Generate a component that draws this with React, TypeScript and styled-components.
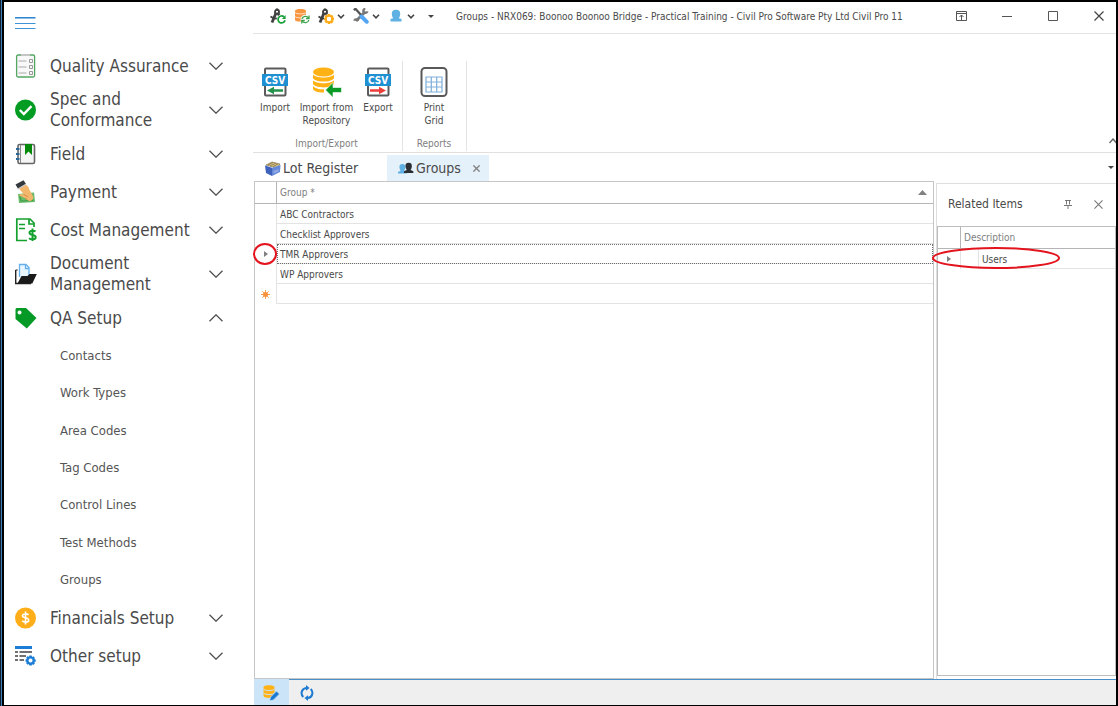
import React, { useState } from "react";
import styled, { createGlobalStyle } from "styled-components";

const Global = createGlobalStyle`
  *, *::before, *::after { box-sizing: border-box; }
  body { margin: 0; background: #fff; }
  body, button, table, input {
    font-family: "DejaVu Sans Condensed", "Noto Sans", sans-serif;
    color: #4a4a4a;
  }
  button { border: 0; padding: 0; background: none; cursor: pointer; }
  svg { display: block; flex: none; }
`;

/* ---------- frame ---------- */

const Desktop = styled.div`
  min-height: 100vh;
  display: flex;
  background: #3f7fb8;
  border-left: 1px solid #10202f;
  padding-left: 1px;
`;

const Window = styled.div`
  flex: 1;
  min-width: 0;
  display: flex;
  background: #fff;
  border: solid #000;
  border-width: 2px 2px 1px 2px;
`;

const Sidebar = styled.nav`
  width: 249px;
  flex: none;
  padding: 11px 30px 20px 11px;
`;

const Main = styled.main`
  flex: 1;
  min-width: 0;
  display: flex;
  flex-direction: column;
`;

/* ---------- sidebar ---------- */

const MenuToggle = styled.button`
  display: block;
  height: 34px;
  padding-bottom: 14px;
`;

const NavSection = styled.button<{ $tall?: boolean }>`
  width: 100%;
  height: ${(p) => (p.$tall ? 50 : 38)}px;
  display: grid;
  grid-template-columns: 22px 1fr 14px;
  column-gap: 13px;
  align-items: center;
  text-align: left;
  font-size: 17px;
  line-height: 21px;
`;

const SubList = styled.ul`
  list-style: none;
  margin: 0;
  padding: 0 0 0 45px;
  height: 262px;
  display: grid;
  grid-template-rows: repeat(7, 1fr);
  align-items: center;
`;

const SubLink = styled.a`
  display: block;
  font-size: 13px;
  line-height: 18px;
  color: #555;
  text-decoration: none;
`;

/* ---------- title bar ---------- */

const TitleBar = styled.header`
  height: 32px;
  display: flex;
  align-items: center;
  padding-left: 17px;
  padding-bottom: 3px;
  border-bottom: 1px solid #e3e3e3;
`;

const QuickTools = styled.div`
  display: flex;
  align-items: center;
  gap: 8px;
`;

const QuickTool = styled.button`
  display: flex;
  align-items: center;
  justify-content: center;
  gap: 3px;
  min-width: 16px;
`;

const DropTool = styled(QuickTool)`
  width: 27px;
`;

const Title = styled.h1`
  flex: 1;
  margin: 0 0 0 17px;
  font-size: 10px;
  font-weight: 400;
  white-space: nowrap;
`;

const WindowControls = styled.div`
  display: flex;
  gap: 12px;
`;

const WindowButton = styled.button`
  width: 34px;
  height: 24px;
  display: grid;
  place-items: center;
`;

/* ---------- ribbon ---------- */

const Ribbon = styled.section`
  height: 119px;
  display: flex;
  align-items: stretch;
  padding: 27px 0 0 2px;
  border-bottom: 1px solid #e0e0e0;
  position: relative;
`;

const RibbonGroup = styled.div`
  display: flex;
  flex-direction: column;
  justify-content: space-between;
  padding: 6px 4px 1px 0;
  border-right: 1px solid #e3e3e3;
  margin-bottom: 1px;
`;

const RibbonTools = styled.div`
  display: flex;
  align-items: flex-start;
`;

const RibbonTool = styled.button<{ $wide?: boolean }>`
  width: ${(p) => (p.$wide ? 63 : 40)}px;
  display: flex;
  flex-direction: column;
  align-items: center;
  gap: 4px;
  font-size: 10px;
  line-height: 13px;
`;

const GroupCaption = styled.div`
  font-size: 10px;
  line-height: 12px;
  text-align: center;
  color: #808080;
`;

const ReportsGroup = styled(RibbonGroup)`
  padding: 6px 12px 1px 11px;
`;

const CollapseButton = styled.button`
  position: absolute;
  right: 0;
  bottom: 8px;
`;

/* ---------- tabs ---------- */

const TabBar = styled.div`
  height: 28px;
  display: flex;
  align-items: flex-end;
  padding-left: 2px;
`;

const Tab = styled.div<{ $active?: boolean }>`
  height: 26px;
  display: flex;
  align-items: center;
  width: ${(p) => (p.$active ? 102 : 132)}px;
  padding-left: ${(p) => (p.$active ? 11 : 10)}px;
  background: ${(p) => (p.$active ? "#e5f1fa" : "transparent")};
`;

const TabLabel = styled.button`
  display: flex;
  align-items: center;
  gap: 2px;
  font-size: 14px;
  line-height: 18px;
`;

const TabClose = styled.button`
  margin-left: auto;
  padding-right: 9px;
`;

const TabMenu = styled.button`
  margin: 0 2px 12px auto;
`;

/* ---------- content ---------- */

const Workspace = styled.div`
  flex: 1;
  display: flex;
  gap: 2px;
  padding-left: 1px;
`;

const GridPane = styled.section`
  flex: 1;
  min-width: 0;
  border: 1px solid #c6c6c6;
`;

const DataGrid = styled.table`
  width: 100%;
  table-layout: fixed;
  border-collapse: separate;
  border-spacing: 0;
  font-size: 10px;
  line-height: 12px;
`;

const HeadCell = styled.th`
  height: 22px;
  padding: 0 6px 0 3px;
  border-bottom: 1px solid #b5b5b5;
  text-align: left;
  font-weight: 400;
  color: #808080;
`;

const MarkerHead = styled(HeadCell)<{ $width?: number }>`
  width: ${(p) => p.$width ?? 22}px;
  border-right: 1px solid #b5b5b5;
`;

const HeadContent = styled.div`
  display: flex;
  align-items: center;
  justify-content: space-between;
`;

const MarkerCell = styled.td`
  position: relative;
  padding: 0;
  border-right: 1px solid #e3e3e3;
`;

const Marker = styled.div`
  display: grid;
  place-items: center;
`;

const Cell = styled.td<{ $focused?: boolean }>`
  height: 20px;
  padding: 2px 3px 0;
  border-bottom: 1px solid #e3e3e3;
  outline: ${(p) => (p.$focused ? "1px dotted #707070" : "none")};
  outline-offset: ${(p) => (p.$focused ? "-1px" : "0")};
`;

const Ring = styled.svg<{ $left: number; $top: number }>`
  position: absolute;
  left: ${(p) => p.$left}px;
  top: ${(p) => p.$top}px;
  z-index: 2;
  pointer-events: none;
`;

const RelatedPane = styled.aside`
  width: 180px;
  flex: none;
  display: flex;
  flex-direction: column;
  margin-top: 2px;
  padding-bottom: 3px;
  border: solid #dedede;
  border-width: 1px 0 0 1px;
`;

const RelatedHeader = styled.div`
  height: 42px;
  display: flex;
  align-items: center;
  padding: 0 13px 2px 11px;
`;

const RelatedTitle = styled.h2`
  flex: 1;
  margin: 0;
  font-size: 12px;
  font-weight: 400;
`;

const RelatedTools = styled.div`
  display: flex;
  align-items: center;
  gap: 22px;
`;

const RelatedBody = styled.div`
  flex: 1;
  border: 1px solid #bdbdbd;
`;

/* ---------- status bar ---------- */

const StatusBar = styled.footer`
  height: 26px;
  display: flex;
  padding-left: 1px;
  background: linear-gradient(to right, #fff 1px, #efefef 1px);
`;

const StatusTools = styled.div`
  flex: 1;
  display: flex;
  border-top: 1px solid #4a90c8;
`;

const StatusButton = styled.button<{ $active?: boolean }>`
  width: 35px;
  display: grid;
  place-items: center;
  background: ${(p) => (p.$active ? "#cce4f7" : "transparent")};
`;

/* ---------- icons ---------- */

const Chevron = ({ up = false }: { up?: boolean }) => (
  <svg width="14" height="8" viewBox="0 0 14 8" fill="none" stroke="#505050" strokeWidth="1.3">
    <path d={up ? "M.5 7.2 7 .8l6.5 6.4" : "M.5.8 7 7.2 13.5.8"} />
  </svg>
);

const SmallChevron = () => (
  <svg width="8" height="5" viewBox="0 0 8 5" fill="none" stroke="#444" strokeWidth="1.6">
    <path d="M1 .8 4 3.8 7 .8" />
  </svg>
);

const Caret = () => (
  <svg width="6" height="3" viewBox="0 0 6 3" fill="#444">
    <path d="M0 0h6L3 3z" />
  </svg>
);

const Hamburger = () => (
  <svg width="21" height="12" viewBox="0 0 21 12">
    <path d="M0 .8h20.500" stroke="#1979ca" strokeWidth="1.4" />
    <path d="M0 6.500h20.500M0 11.500h20.500" stroke="#3f92d6" />
  </svg>
);

const ChecklistIcon = () => (
  <svg width="22" height="24" viewBox="0 0 22 24" fill="none">
    <rect x="1.600" y="1" width="18" height="22" rx="1.500" fill="#f8f8f8" stroke="#53a562" strokeWidth="1.300" />
    <path d="M6 1h9" stroke="#c5c5c5" strokeWidth="2" />
    <path d="M3.500 7h8M3.500 13h8M3.500 19h8" stroke="#aaa" strokeWidth="1.200" />
    <path d="M14.500 5.500h3v3h-3zM14.500 11.500h3v3h-3zM14.500 17.500h3v3h-3z" stroke="#999" />
  </svg>
);

const CheckIcon = () => (
  <svg width="22" height="22" viewBox="0 0 22 22">
    <circle cx="10.500" cy="11" r="10.500" fill="#039c23" />
    <path d="m4.800 11 4 4L16.500 7.200" fill="none" stroke="#fff" strokeWidth="2.400" />
  </svg>
);

const NotebookIcon = () => (
  <svg width="22" height="22" viewBox="0 0 22 22">
    <rect x="3" y="1.500" width="16.500" height="19" rx="1.500" fill="#f5f5f5" stroke="#666" strokeWidth="1.600" />
    <path d="M5.500 2v18" stroke="#888" />
    <path d="M10 1h7v11l-3.500-3.500L10 12z" fill="#078a0b" />
    <path d="M1 6h3.500M1 11h3.500M1 16h3.500" stroke="#28699b" strokeWidth="2" />
  </svg>
);

const PaymentIcon = () => (
  <svg width="22" height="24" viewBox="0 0 22 24">
    <path d="m3 14 16-1.500 1 9.500L4 23z" fill="#68bc68" />
    <path d="m5 16 12-1 .8 5.500L6 21z" fill="none" stroke="#3f9849" />
    <path d="M3 7.500 10 4c3 2 4 3.500 4.500 6l3.500 6c1 3-1 5-4 5l-4-3-5-2c-1-1 0-2 1-2l3 .5z" fill="#f2b66c" />
    <path d="M9 14.500 13 17M10 18l2 1.500" stroke="#d88e48" />
    <path d="M.5 4.500 8.500.2 11 4 3 8.800z" fill="#33383d" />
    <path d="m2.500 9.200 8.500-5" stroke="#c9ccd0" strokeWidth="1.200" />
  </svg>
);

const CostIcon = () => (
  <svg width="22" height="24" viewBox="0 0 22 24" fill="none" stroke="#14a02e">
    <path d="M19 9V5l-4-4H1.800v21.500H12" strokeWidth="1.700" />
    <path d="M14 1v5h5" strokeWidth="1.700" />
    <path d="M4 6.500h6M4 10.500h6" strokeWidth="1.500" />
    <path d="M20.500 13.500c-1-1-6-1.500-6 1.300 0 3 6.200 1.400 6.200 4.400 0 2.800-5 2.600-6.700 1M17.500 10.500v12.500" strokeWidth="2" />
  </svg>
);

const FoldersIcon = () => (
  <svg width="22" height="22" viewBox="0 0 22 22">
    <path d="M4.500 14V1.500H11l3 3V13" fill="#e9f5ff" stroke="#66b0ee" strokeWidth="1.300" />
    <path d="M10.500 1.500v4H14" fill="none" stroke="#66b0ee" strokeWidth="1.300" />
    <path d="M.7 7v13.500H16" fill="none" stroke="#222" strokeWidth="1.400" />
    <path d="M.7 7h2" stroke="#222" />
    <path d="M2.500 20.500 6.500 13h6l2-2h7.300l-4.500 9.500z" fill="#1a1a1a" />
  </svg>
);

const TagIcon = () => (
  <svg width="22" height="22" viewBox="0 0 22 22">
    <path fillRule="evenodd" d="M1.500 1H11l10.500 10-9.700 10.500L.5 12V2zM4.500 3.400a2 2 0 1 0 .1 0z" fill="#049a25" />
  </svg>
);

const CoinIcon = () => (
  <svg width="22" height="22" viewBox="0 0 22 22">
    <circle cx="10.500" cy="11" r="10.500" fill="#ffae1a" />
    <path d="M13.500 8c-1-1.500-6-1.600-6 .8 0 2.600 6.200 1.400 6.200 4.400 0 2.500-5 2.500-6.500.6M10.500 4.500v13" fill="none" stroke="#fff" strokeWidth="1.600" />
  </svg>
);

const GEAR =
  "M-1.200-5h2.400l.4 1.500 1.200-.8 1.700 1.700-.8 1.200 1.500.3v2.400l-1.500.3.8 1.200-1.700 1.700-1.200-.8L1.200 5h-2.400l-.4-1.500-1.200.8-1.700-1.700.8-1.200L-5 1.100v-2.200l1.400-.4-.8-1.200 1.700-1.700 1.200.8zM0-2a2 2 0 1 0 .1 0z";

const SetupIcon = () => (
  <svg width="22" height="22" viewBox="0 0 22 22">
    <path d="M0 2.500h17" stroke="#1b7dd6" strokeWidth="3" />
    <path d="M0 7h3M4.500 7H17M0 11h3M4.500 11H11M0 15h3M4.500 15H9" stroke="#707070" strokeWidth="2" />
    <path fillRule="evenodd" transform="translate(15.500 15.500)" d={GEAR} fill="#1b7dd6" />
  </svg>
);

const Compass = ({ children }: { children: React.ReactNode }) => (
  <svg width="16" height="16" viewBox="0 0 16 16" fill="none" stroke="#404040">
    <path d="M7 .5v2" strokeWidth="2.200" />
    <circle cx="7" cy="3.800" r="2" strokeWidth="1.900" />
    <path d="M6 5 2 14.500M8 5l4.500 9.500" strokeWidth="2.800" />
    <path d="M.5 8.500C4 11 8 11 11 9" strokeWidth="1.800" />
    {children}
  </svg>
);

const CompassRefresh = () => (
  <Compass>
    <circle cx="11.500" cy="11.300" r="4.700" fill="#fff" stroke="none" />
    <path d="M14 8.900A3.500 3.500 0 1 0 15 12.300" stroke="#17a038" strokeWidth="1.700" />
    <path d="M15.600 7v4H12z" fill="#17a038" stroke="none" />
  </Compass>
);

const CompassGear = () => (
  <Compass>
    <circle cx="11" cy="11" r="5" fill="#fff" stroke="none" />
    <path d={GEAR} transform="translate(11 11)" fill="#ffab17" stroke="none" fillRule="evenodd" />
    <circle cx="11" cy="11" r="2.200" fill="#fff" stroke="none" />
  </Compass>
);

const DatabaseRefresh = () => (
  <svg width="16" height="16" viewBox="0 0 16 16">
    <path d="M1 2.500C1 .4 12 .4 12 2.500V12c0 2-11 2-11 0z" fill="#f8953f" />
    <path d="M1 4.500c1 1.800 10 1.800 11 0M1 8.500c1 1.800 10 1.800 11 0" fill="none" stroke="#fff" strokeWidth=".7" />
    <circle cx="11.300" cy="11.500" r="4.700" fill="#fff" />
    <g fill="none" stroke="#3ba24b" strokeWidth="1.300">
      <path d="M8 11c.5-3 5-3.500 6.500-1M14.800 12c-.5 3-5 3.500-6.500 1" />
      <path d="M15 7.500v3h-3M7.800 15.500v-3h3" />
    </g>
  </svg>
);

const ToolsIcon = () => (
  <svg width="16" height="16" viewBox="0 0 16 16" fill="none">
    <path d="M12.500 3.500 3 13" stroke="#777" strokeWidth="2.800" />
    <path d="M14.600 3.300c-.8 2-3.200 2.200-4 .8S10.500.9 12.300 1M1.200 12.800c.6-2 3.400-1.800 3.800.2" stroke="#777" strokeWidth="2.200" />
    <path d="M.8 2.200 2.500.8 8 7" stroke="#555" strokeWidth="2.300" />
    <path d="m8.500 8.500 5.300 5.300" stroke="#53a6f5" strokeWidth="3.900" strokeLinecap="round" />
  </svg>
);

const PERSON = "M5.500 0C8.600 0 9.500 2 9.200 4.500 9 6.500 8 7.500 7.800 8.500L11 10v2H0v-2l3.200-1.500C3 7.500 2 6.500 1.800 4.500 1.500 2 2.400 0 5.500 0z";

const UserIcon = () => (
  <svg width="16" height="16" viewBox="0 0 16 16">
    <path d="M8 1.800c3.200 0 4.400 1.800 4.200 4.400-.2 2-.8 3.200-1.400 4L13.500 11v2.500h-11V11l2.700-.8c-.6-.8-1.200-2-1.400-4C3.600 3.600 4.800 1.800 8 1.800z" fill="#5eb1e2" />
  </svg>
);

const UsersIcon = () => (
  <svg width="16" height="12" viewBox="0 0 16 12">
    <path d={PERSON} transform="translate(0 2) scale(.8)" fill="#5eb1e2" />
    <path d={PERSON} transform="translate(6 .8) scale(.85)" fill="#2b2f33" />
  </svg>
);

const DisplayOptions = () => (
  <svg width="11" height="10" viewBox="0 0 11 10" fill="none" stroke="#555">
    <path d="M.5.500h10v9H.5zM.5 2.500h10M5.500 9V4M3.500 6l2-2 2 2" />
  </svg>
);

const Cross = ({ size, color }: { size: number; color: string }) => (
  <svg width={size} height={size} viewBox="0 0 10 10" stroke={color} strokeWidth={size > 8 ? 1.2 : 2}>
    <path d="m.5.500 9 9M9.500.500l-9 9" />
  </svg>
);

const CsvIcon = ({ out = false }: { out?: boolean }) => (
  <svg width="26" height="30" viewBox="0 0 26 30">
    <rect x="3" y="1.500" width="20.500" height="27" rx="1" fill="#fff" stroke="#5b5b5b" strokeWidth="2" />
    <rect y="7" width="26" height="12" fill="#1f90d2" />
    <text x="13" y="16.500" textAnchor="middle" fontFamily="DejaVu Sans Condensed, sans-serif" fontWeight="700" fontSize="10" fill="#fff">
      CSV
    </text>
    {out ? (
      <path d="M5 22.300h9V19.800l7 3.700-7 3.700v-2.500H5z" fill="#ee3e3a" />
    ) : (
      <path d="M21 22.300h-9V19.800l-7 3.700 7 3.700v-2.500h9z" fill="#23924a" />
    )}
  </svg>
);

const RepositoryIcon = () => (
  <svg width="30" height="30" viewBox="0 0 30 30">
    <g fill="#ffb216">
      <ellipse cx="11.500" cy="5" rx="10.500" ry="4.500" />
      <path d="M1 7.500c3 4 18 4 21 0v3.700c-3 4.500-18 4.500-21 0z" />
      <path d="M1 13.200c3 4 18 4 21 0V17c-3 4.500-18 4.500-21 0z" />
      <path d="M1 19c2 2.700 7 3.500 11 3.300v3.200C6 25.700 1.500 24 1 22z" />
    </g>
    <path d="M13.500 23 21 15.500V20.500h8.500v5H21v5z" fill="#0b9a25" stroke="#fff" strokeWidth=".6" />
  </svg>
);

const PrintGridIcon = () => (
  <svg width="28" height="30" viewBox="0 0 28 30" fill="none">
    <rect x="1.500" y="1" width="25" height="28" rx="3.500" stroke="#595959" strokeWidth="2" />
    <path d="M6 10h16v15H6zM6 15h16M6 20h16M11.300 10v15M16.700 10v15" stroke="#7eafd9" strokeWidth="1.200" />
  </svg>
);

const LotIcon = () => (
  <svg width="16" height="15" viewBox="0 0 16 15">
    <path d="m1 4 6-3 8 2-3 4z" fill="#dac88d" stroke="#75663b" strokeWidth=".6" />
    <path d="m3 4 5-2.500M5 5l6-3M8 5.500 13 3" stroke="#7d6b3b" strokeWidth=".8" />
    <path d="m0 4.500 7 2.200V15l-6-3z" fill="#3f62bd" />
    <path d="M7 6.700 15.500 4 15 11l-8 4z" fill="#6688d8" />
    <path d="M8.500 10 13.500 8v2.500l-5 2z" fill="#91a9e5" />
  </svg>
);

const Pin = () => (
  <svg width="8" height="9" viewBox="0 0 8 9" fill="none" stroke="#777">
    <path d="M1 .5h6M2.500.5v4M5.500.5v4M0 5.500h8M4 5.500V9" />
  </svg>
);

const RowArrow = () => (
  <svg width="4" height="6" viewBox="0 0 4 6" fill="#808080">
    <path d="m0 0 4 3-4 3z" />
  </svg>
);

const SortArrow = () => (
  <svg width="9" height="5" viewBox="0 0 9 5" fill="#808080">
    <path d="M0 5 4.500 0 9 5z" />
  </svg>
);

const NewRow = () => (
  <svg width="9" height="9" viewBox="0 0 9 9">
    <path d="M4.500 0v9M0 4.500h9M1.300 1.300l6.400 6.400M7.700 1.300 1.300 7.700" stroke="#f6a154" />
    <circle cx="4.500" cy="4.500" r="2.500" fill="#f7913a" />
  </svg>
);

const EditDataIcon = () => (
  <svg width="17" height="17" viewBox="0 0 17 17">
    <path d="M.5 3C.5.5 11.500.5 11.500 3v9c0 2.500-11 2.500-11 0z" fill="#ffb216" />
    <path d="M.5 5c1 2 10 2 11 0M.5 9c1 2 10 2 11 0" fill="none" stroke="#cce4f7" />
    <path d="m6.500 17 1-4 6-6 3 3-6 6z" fill="#1d7ad2" stroke="#cce4f7" strokeWidth=".8" />
  </svg>
);

const SyncIcon = () => (
  <svg width="14" height="16" viewBox="0 0 14 16" fill="none" stroke="#1d7ad2" strokeWidth="2">
    <path d="M3.300 11.900A5.200 5.200 0 0 1 6.300 2.900M10.700 4.100A5.200 5.200 0 0 1 7.700 13.100" />
    <path d="M6 0 9.500 2.900 6 5.800zM8 10.200v5.800l-3.500-2.900z" fill="#1d7ad2" stroke="none" />
  </svg>
);

/* ---------- data ---------- */

const sectionsAbove = [
  { label: "Quality Assurance", icon: <ChecklistIcon /> },
  { label: "Spec and Conformance", icon: <CheckIcon />, tall: true },
  { label: "Field", icon: <NotebookIcon /> },
  { label: "Payment", icon: <PaymentIcon /> },
  { label: "Cost Management", icon: <CostIcon /> },
  { label: "Document Management", icon: <FoldersIcon />, tall: true },
];

const sectionsBelow = [
  { label: "Financials Setup", icon: <CoinIcon /> },
  { label: "Other setup", icon: <SetupIcon /> },
];

const setupLinks = ["Contacts", "Work Types", "Area Codes", "Tag Codes", "Control Lines", "Test Methods", "Groups"];

const groups = ["ABC Contractors", "Checklist Approvers", "TMR Approvers", "WP Approvers"];

export default function App() {
  const [open, setOpen] = useState(true);
  const [selected, setSelected] = useState(2);

  return (
    <>
      <Global />
      <Desktop>
        <Window>
          <Sidebar>
            <MenuToggle aria-label="Toggle menu">
              <Hamburger />
            </MenuToggle>
            {sectionsAbove.map((s) => (
              <NavSection key={s.label} $tall={s.tall}>
                {s.icon}
                <span>{s.label}</span>
                <Chevron />
              </NavSection>
            ))}
            <NavSection aria-expanded={open} onClick={() => setOpen(!open)}>
              <TagIcon />
              <span>QA Setup</span>
              <Chevron up={open} />
            </NavSection>
            {open && (
              <SubList>
                {setupLinks.map((label) => (
                  <li key={label}>
                    <SubLink href="#">{label}</SubLink>
                  </li>
                ))}
              </SubList>
            )}
            {sectionsBelow.map((s) => (
              <NavSection key={s.label}>
                {s.icon}
                <span>{s.label}</span>
                <Chevron />
              </NavSection>
            ))}
          </Sidebar>

          <Main>
            <TitleBar>
              <QuickTools>
                <QuickTool aria-label="Refresh project"><CompassRefresh /></QuickTool>
                <QuickTool aria-label="Refresh data"><DatabaseRefresh /></QuickTool>
                <DropTool aria-label="Project settings"><CompassGear /><SmallChevron /></DropTool>
                <DropTool aria-label="Tools"><ToolsIcon /><SmallChevron /></DropTool>
                <DropTool aria-label="User"><UserIcon /><SmallChevron /></DropTool>
                <QuickTool aria-label="Customise toolbar"><Caret /></QuickTool>
              </QuickTools>
              <Title>Groups - NRX069: Boonoo Boonoo Bridge - Practical Training - Civil Pro Software Pty Ltd Civil Pro 11</Title>
              <WindowControls>
                <WindowButton aria-label="Ribbon display options"><DisplayOptions /></WindowButton>
                <WindowButton aria-label="Minimise">
                  <svg width="10" height="1"><path d="M0 .5h10" stroke="#555" /></svg>
                </WindowButton>
                <WindowButton aria-label="Maximise">
                  <svg width="10" height="10"><path d="M.5.5h9v9h-9z" fill="none" stroke="#555" /></svg>
                </WindowButton>
                <WindowButton aria-label="Close"><Cross size={10} color="#444" /></WindowButton>
              </WindowControls>
            </TitleBar>

            <Ribbon>
              <RibbonGroup>
                <RibbonTools>
                  <RibbonTool><CsvIcon />Import</RibbonTool>
                  <RibbonTool $wide><RepositoryIcon />Import from Repository</RibbonTool>
                  <RibbonTool><CsvIcon out />Export</RibbonTool>
                </RibbonTools>
                <GroupCaption>Import/Export</GroupCaption>
              </RibbonGroup>
              <ReportsGroup>
                <RibbonTools>
                  <RibbonTool><PrintGridIcon />Print<br />Grid</RibbonTool>
                </RibbonTools>
                <GroupCaption>Reports</GroupCaption>
              </ReportsGroup>
              <CollapseButton aria-label="Collapse ribbon">
                <svg width="7" height="6" fill="none" stroke="#666" strokeWidth="1.4"><path d="m.5 5 3.500-4 3.500 4" /></svg>
              </CollapseButton>
            </Ribbon>

            <TabBar>
              <Tab>
                <TabLabel><LotIcon />Lot Register</TabLabel>
              </Tab>
              <Tab $active>
                <TabLabel><UsersIcon />Groups</TabLabel>
                <TabClose aria-label="Close Groups"><Cross size={7} color="#858585" /></TabClose>
              </Tab>
              <TabMenu aria-label="Open tabs"><Caret /></TabMenu>
            </TabBar>

            <Workspace>
              <GridPane>
                <DataGrid>
                  <thead>
                    <tr>
                      <MarkerHead aria-label="Row state" />
                      <HeadCell>
                        <HeadContent>Group *<SortArrow /></HeadContent>
                      </HeadCell>
                    </tr>
                  </thead>
                  <tbody>
                    {groups.map((name, i) => (
                      <tr key={name} onClick={() => setSelected(i)}>
                        <MarkerCell>
                          {i === selected && (
                            <>
                              <Marker><RowArrow /></Marker>
                              <Ring $left={-2} $top={-2} width="24" height="24">
                                <ellipse cx="12" cy="12" rx="11" ry="10" fill="none" stroke="#e3141e" strokeWidth="2" />
                              </Ring>
                            </>
                          )}
                        </MarkerCell>
                        <Cell $focused={i === selected}>{name}</Cell>
                      </tr>
                    ))}
                    <tr>
                      <MarkerCell><Marker><NewRow /></Marker></MarkerCell>
                      <Cell />
                    </tr>
                  </tbody>
                </DataGrid>
              </GridPane>

              <RelatedPane>
                <RelatedHeader>
                  <RelatedTitle>Related Items</RelatedTitle>
                  <RelatedTools>
                    <button aria-label="Pin panel"><Pin /></button>
                    <button aria-label="Close panel"><Cross size={9} color="#777" /></button>
                  </RelatedTools>
                </RelatedHeader>
                <RelatedBody>
                  <DataGrid>
                    <colgroup>
                      <col width="23" />
                      <col width="18" />
                      <col />
                    </colgroup>
                    <thead>
                      <tr>
                        <MarkerHead $width={23} aria-label="Row state" />
                        <HeadCell colSpan={2}>Description</HeadCell>
                      </tr>
                    </thead>
                    <tbody>
                      <tr>
                        <MarkerCell>
                          <Marker><RowArrow /></Marker>
                          <Ring $left={-7} $top={-2} width="130" height="24">
                            <ellipse cx="65" cy="11" rx="63" ry="10" fill="none" stroke="#e3141e" strokeWidth="2" />
                          </Ring>
                        </MarkerCell>
                        <MarkerCell />
                        <Cell>Users</Cell>
                      </tr>
                    </tbody>
                  </DataGrid>
                </RelatedBody>
              </RelatedPane>
            </Workspace>

            <StatusBar>
              <StatusButton $active aria-label="Edit data"><EditDataIcon /></StatusButton>
              <StatusTools>
                <StatusButton aria-label="Refresh"><SyncIcon /></StatusButton>
              </StatusTools>
            </StatusBar>
          </Main>
        </Window>
      </Desktop>
    </>
  );
}
